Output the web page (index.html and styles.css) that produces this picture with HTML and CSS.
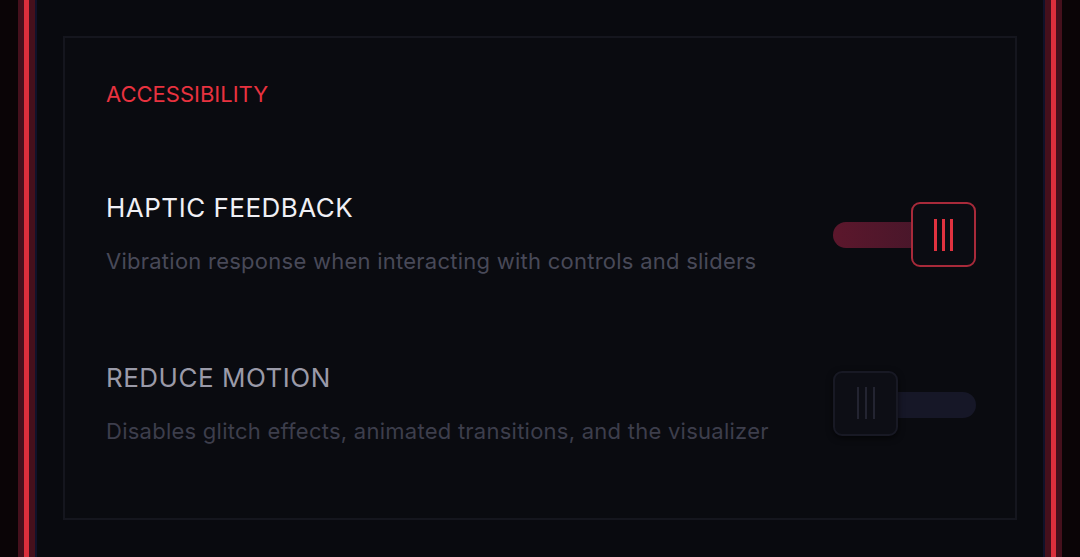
FILE: index.html
```html
<!DOCTYPE html>
<html>
<head>
<meta charset="utf-8">
<link rel="stylesheet" href="styles.css">
</head>
<body>
<div class="frame">
  <section class="card">
    <h2 class="section-label">ACCESSIBILITY</h2>
    <div class="setting">
      <div class="setting-text">
        <h3 class="setting-title">HAPTIC FEEDBACK</h3>
        <p class="setting-desc">Vibration response when interacting with controls and sliders</p>
      </div>
      <div class="toggle toggle-on">
        <div class="track"></div>
        <div class="knob"><span></span><span></span><span></span></div>
      </div>
    </div>
    <div class="setting setting-dim">
      <div class="setting-text">
        <h3 class="setting-title">REDUCE MOTION</h3>
        <p class="setting-desc">Disables glitch effects, animated transitions, and the visualizer</p>
      </div>
      <div class="toggle toggle-off">
        <div class="track"></div>
        <div class="knob"><span></span><span></span><span></span></div>
      </div>
    </div>
  </section>
</div>
</body>
</html>
```

FILE: styles.css
```css
html, body {
  margin: 0;
  padding: 0;
}
body {
  width: 1080px;
  height: 557px;
  overflow: hidden;
  background: #0a0406;
  font-family: "Inter", "Lato", sans-serif;
}
.frame {
  margin: 0 18px;
  height: 557px;
  box-sizing: border-box;
  padding: 36px 45px 0 45px;
  background: #090a0f;
  box-shadow:
    inset 6px 0 0 #45101c,
    inset 11px 0 0 #dc2f3c,
    inset 17px 0 0 #45101c,
    inset 19px 0 0 #10122a,
    inset -6px 0 0 #45101c,
    inset -11px 0 0 #dc2f3c,
    inset -17px 0 0 #45101c,
    inset -19px 0 0 #10122a;
}
.card {
  box-sizing: border-box;
  height: 484px;
  border: 2px solid #15161e;
  background: #0a0b10;
  padding: 0 39px 0 41px;
  display: flex;
  flex-direction: column;
}
.section-label {
  margin: 42px 0 0 0;
  font-size: 22px;
  line-height: 28px;
  font-weight: 400;
  color: #e8323f;
  letter-spacing: 0;
}
.setting {
  display: flex;
  align-items: center;
  justify-content: space-between;
  height: 170px;
}
.setting:first-of-type {
  margin-top: 40px;
}
.setting-title {
  margin: 0;
  font-size: 26px;
  line-height: 32px;
  font-weight: 400;
  letter-spacing: 0.5px;
  color: #f0f0f5;
}
.setting-desc {
  margin: 24px 0 0 0;
  font-size: 22px;
  line-height: 26px;
  letter-spacing: 0.25px;
  color: #484958;
}
.setting-dim .setting-title {
  color: #9a9aa8;
}
.setting-dim .setting-desc {
  color: #3d3e4c;
}
.toggle {
  position: relative;
  width: 143px;
  height: 65px;
  display: flex;
  align-items: center;
}
.toggle-on {
  margin-top: 3px;
}
.track {
  width: 100%;
  height: 26px;
  border-radius: 13px;
}
.toggle-on .track {
  background: linear-gradient(90deg, #5c172c, #3b1629);
}
.toggle-off .track {
  margin-top: 3px;
  background: #161727;
}
.knob {
  position: absolute;
  top: 0;
  width: 61px;
  height: 61px;
  border: 2px solid;
  border-radius: 9px;
  background: #0b0c12;
  display: flex;
  align-items: center;
  justify-content: center;
  gap: 5px;
}
.knob span {
  width: 3px;
  height: 32px;
}
.toggle-on .knob {
  right: 0;
  border-color: #a82a3a;
}
.toggle-on .knob span {
  background: #e0323f;
}
.toggle-off .knob {
  left: 0;
  gap: 6px;
  border-color: #181924;
  background: #0d0e15;
  box-shadow: 0 2px 6px rgba(0,0,0,0.6);
}
.toggle-off .knob span {
  width: 2px;
  background: #232431;
}
```
